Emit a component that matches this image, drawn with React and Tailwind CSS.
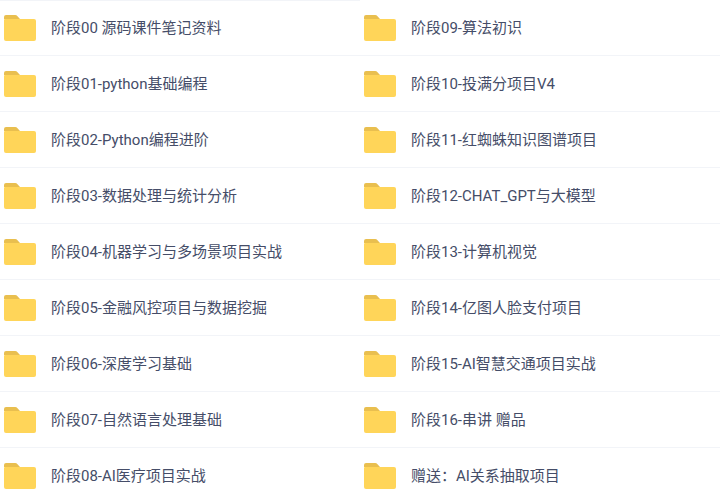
const left = [
  '阶段00 源码课件笔记资料',
  '阶段01-python基础编程',
  '阶段02-Python编程进阶',
  '阶段03-数据处理与统计分析',
  '阶段04-机器学习与多场景项目实战',
  '阶段05-金融风控项目与数据挖掘',
  '阶段06-深度学习基础',
  '阶段07-自然语言处理基础',
  '阶段08-AI医疗项目实战',
];

const right = [
  '阶段09-算法初识',
  '阶段10-投满分项目V4',
  '阶段11-红蜘蛛知识图谱项目',
  '阶段12-CHAT_GPT与大模型',
  '阶段13-计算机视觉',
  '阶段14-亿图人脸支付项目',
  '阶段15-AI智慧交通项目实战',
  '阶段16-串讲 赠品',
  '赠送：AI关系抽取项目',
];

const FolderIcon = () => (
  <svg width="32" height="26" viewBox="0 0 32 26" className="shrink-0">
    <path d="M0 2a2 2 0 0 1 2-2h9a3 3 0 0 1 2.5 1.3L16 4H0z" fill="#e9bf4f" />
    <path d="M0 5a1 1 0 0 1 1-1h29a2 2 0 0 1 2 2v18a2 2 0 0 1-2 2H2a2 2 0 0 1-2-2z" fill="#ffd559" />
  </svg>
);

const Row = ({ name }) => (
  <div className="h-14 flex items-center pl-1 border-b border-[#f2f4f8]">
    <FolderIcon />
    <span className="ml-[15px] pt-0.5 text-[15px] text-[#454d68] whitespace-nowrap">{name}</span>
  </div>
);

const App = () => {
  return (
    <div className="w-[720px] h-[499px] overflow-hidden bg-white font-['Roboto','Noto_Sans_CJK_SC',sans-serif]">
      <div className="grid grid-cols-2">
        <div className="shadow-[inset_0_1px_0_#f2f4f8]">
          {left.map((name) => <Row key={name} name={name} />)}
        </div>
        <div>
          {right.map((name) => <Row key={name} name={name} />)}
        </div>
      </div>
    </div>
  );
};

export default App;
